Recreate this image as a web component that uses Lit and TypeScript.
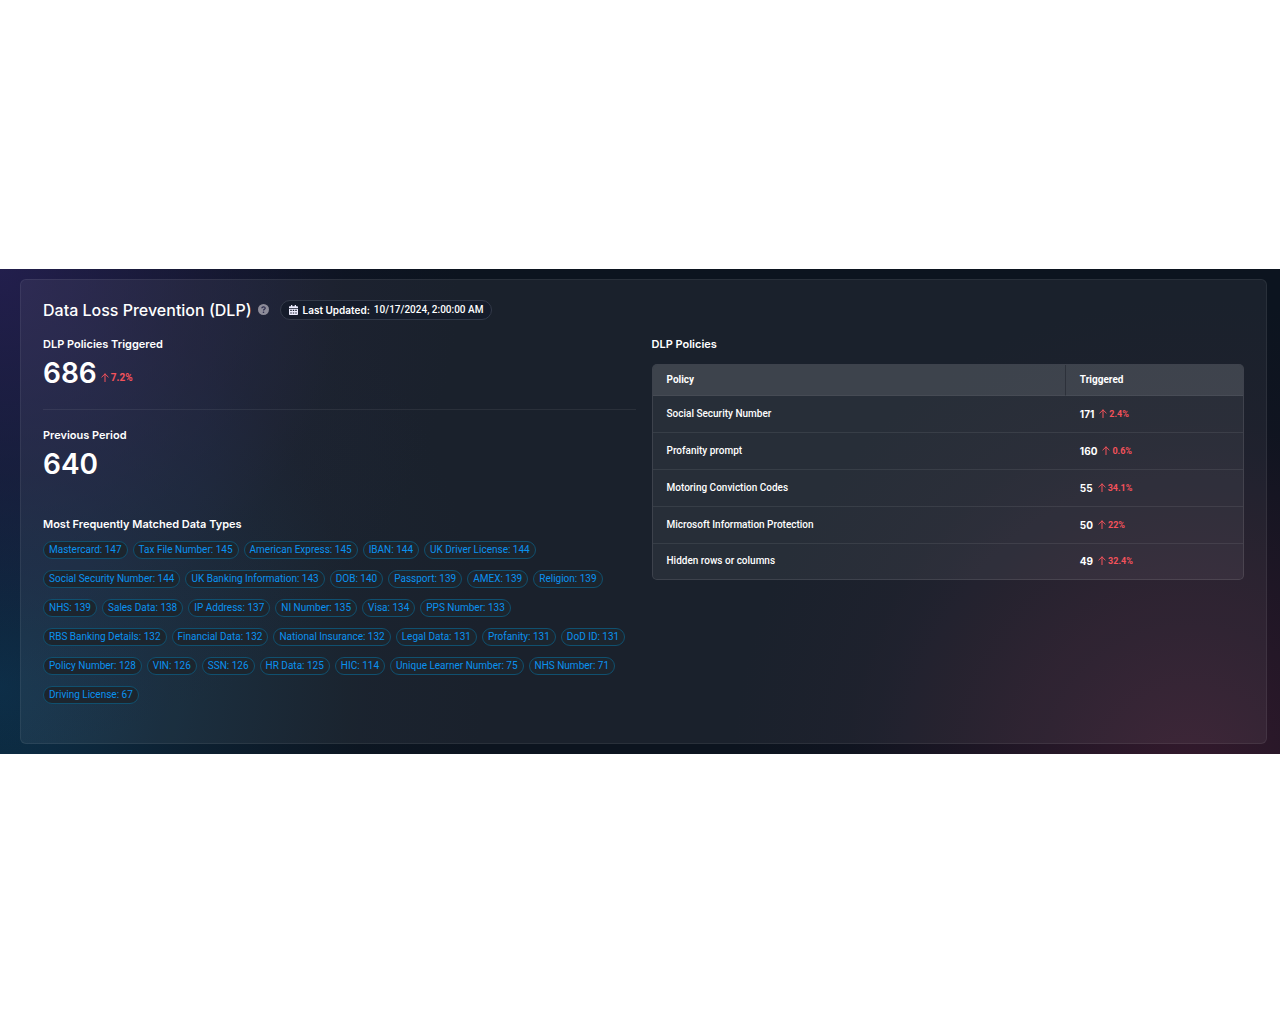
import { LitElement, html, css, svg } from "lit";
import { customElement } from "lit/decorators.js";

const dataTypes: [string, number][][] = [
  [["Mastercard", 147], ["Tax File Number", 145], ["American Express", 145], ["IBAN", 144], ["UK Driver License", 144]],
  [["Social Security Number", 144], ["UK Banking Information", 143], ["DOB", 140], ["Passport", 139], ["AMEX", 139], ["Religion", 139]],
  [["NHS", 139], ["Sales Data", 138], ["IP Address", 137], ["NI Number", 135], ["Visa", 134], ["PPS Number", 133]],
  [["RBS Banking Details", 132], ["Financial Data", 132], ["National Insurance", 132], ["Legal Data", 131], ["Profanity", 131], ["DoD ID", 131]],
  [["Policy Number", 128], ["VIN", 126], ["SSN", 126], ["HR Data", 125], ["HIC", 114], ["Unique Learner Number", 75], ["NHS Number", 71]],
  [["Driving License", 67]],
];

const policies = [
  { name: "Social Security Number", count: 171, change: "2.4%" },
  { name: "Profanity prompt", count: 160, change: "0.6%" },
  { name: "Motoring Conviction Codes", count: 55, change: "34.1%" },
  { name: "Microsoft Information Protection", count: 50, change: "22%" },
  { name: "Hidden rows or columns", count: 49, change: "32.4%" },
];

const trend = (value: string) => html`<span class="trend">
  <svg class="arrow" viewBox="0 0 8 10" aria-hidden="true">${svg`<path d="M4 8.6V0.9M0.8 4L4 0.9L7.2 4" fill="none" stroke="currentColor" stroke-width="1" stroke-linecap="round" stroke-linejoin="round"/>`}</svg>${value}</span>`;

@customElement("app-root")
export class AppRoot extends LitElement {
  static styles = css`
    :host {
      box-sizing: border-box;
      display: flex;
      flex-direction: column;
      justify-content: center;
      min-height: 100vh;
      padding-bottom: 2px;
      background: #fff;
      color: #fff;
      font: 500 10px/16px Roboto, sans-serif;
    }
    * { box-sizing: border-box; }
    h1, h2, p, ul { margin: 0; padding: 0; }
    .backdrop {
      padding: 10px 13px 10px 20px;
      background:
        radial-gradient(ellipse 36% 100% at 0% 0%, rgba(38, 32, 84, 0.85), rgba(33, 29, 72, 0.55) 40%, rgba(25, 24, 54, 0.16) 75%, transparent),
        radial-gradient(ellipse 38% 110% at 0% 86%, rgba(12, 51, 78, 0.9), rgba(13, 43, 65, 0.55) 40%, rgba(14, 32, 48, 0.16) 75%, transparent),
        radial-gradient(ellipse 36% 100% at 93% 106%, rgba(56, 26, 46, 0.9), rgba(46, 24, 42, 0.6) 40%, rgba(30, 21, 36, 0.2) 75%, transparent),
        #0c141f;
    }
    .card {
      padding: 20px 22px 39px;
      border: 1px solid rgba(255, 255, 255, 0.07);
      border-radius: 6px;
      background: rgba(255, 255, 255, 0.06);
    }
    .head { display: flex; align-items: center; height: 20px; }
    h1 { font: 500 16px/20px Inter, sans-serif; }
    .help {
      display: flex;
      margin: 0 11px 0 6px;
      padding: 0;
      border: 0;
      background: none;
      color: #8d8c99;
    }
    .help svg { width: 11px; height: 11px; }
    .updated {
      display: flex;
      align-items: center;
      height: 20px;
      padding: 0 8px;
      border: 1px solid #333a49;
      border-radius: 10px;
      background: #151c2b;
    }
    .updated svg { width: 9px; height: 10px; margin-right: 5px; }
    .updated strong { margin-right: 4px; font: 600 10px/16px Inter, sans-serif; }
    .columns {
      display: grid;
      grid-template-columns: 1fr 1fr;
      gap: 16px;
      margin-top: 15px;
    }
    h2 { font: 600 11px/18px Inter, sans-serif; }
    .metric { display: flex; align-items: baseline; gap: 4px; height: 40px; }
    .value { font: 600 28px/40px Inter, sans-serif; }
    .divider { height: 1px; margin: 16px 0; border: 0; background: rgba(255, 255, 255, 0.07); }
    .trend { display: inline-flex; align-items: center; gap: 2px; color: #f4525b; font-weight: 700; font-size: 10px; }
    .arrow { width: 8px; height: 10px; }
    .types { margin-top: 31px; }
    .tag-rows { display: flex; flex-direction: column; gap: 11px; margin-top: 8px; }
    .tags { display: flex; flex-wrap: wrap; gap: 5px; list-style: none; }
    .tag {
      height: 18px;
      padding: 0 5px;
      border: 1px solid #10506f;
      border-radius: 9px;
      background: #1c252e;
      color: #0a92f0;
      line-height: 16px;
      font-weight: 400;
    }
    .table-frame {
      margin-top: 11px;
      overflow: hidden;
      border: 1px solid rgba(255, 255, 255, 0.1);
      border-radius: 5px;
      background: rgba(255, 255, 255, 0.06);
    }
    table { width: 100%; table-layout: fixed; border-collapse: separate; border-spacing: 0; }
    th { height: 31px; padding: 0 14px; text-align: left; font-weight: 700; background: rgba(255, 255, 255, 0.1); border-bottom: 1px solid rgba(255, 255, 255, 0.05); }
    th:first-child { width: 70%; border-right: 1px solid rgba(20, 24, 34, 0.4); }
    td { height: 37px; padding: 0 14px; border-bottom: 1px solid rgba(255, 255, 255, 0.08); }
    tr:last-child td { height: 35px; border-bottom: 0; }
    .cell { display: flex; align-items: center; gap: 5px; }
    .count { font: 700 10px/16px Inter, sans-serif; }
    td .trend { font-size: 9px; line-height: 16px; }
  `;

  render() {
    return html`
      <main class="backdrop">
        <section class="card" aria-labelledby="title">
          <header class="head">
            <h1 id="title">Data Loss Prevention (DLP)</h1>
            <button class="help" type="button" aria-label="Help">
              <svg viewBox="0 0 22 22" aria-hidden="true">
                <circle cx="11" cy="11" r="11" fill="currentColor" />
                <path d="M7.6 8.4C7.8 4.6 14.4 4.6 14.4 8.4C14.4 10.6 11 10.6 11 13" fill="none" stroke="#29294a" stroke-width="2.4" />
                <circle cx="11" cy="16.4" r="1.6" fill="#29294a" />
              </svg>
            </button>
            <p class="updated">
              <svg viewBox="0 0 18 20" aria-hidden="true">
                <path d="M4 0h2.6v2.5h4.8V0H14v2.5h2.4Q18 2.5 18 4v2.4H0V4Q0 2.5 1.6 2.5H4Z" fill="#eef" />
                <path fill-rule="evenodd" d="M0 7.8H18V18.4Q18 20 16.4 20H1.6Q0 20 0 18.4ZM2.5 9.6v2.4h3V9.6ZM7.5 9.6v2.4h3V9.6ZM12.5 9.6v2.4h3V9.6ZM2.5 14.8v2.4h3v-2.4ZM7.5 14.8v2.4h3v-2.4ZM12.5 14.8v2.4h3v-2.4Z" fill="#eef" />
              </svg>
              <strong>Last Updated:</strong>
              <time datetime="2024-10-17T02:00:00">10/17/2024, 2:00:00 AM</time>
            </p>
          </header>
          <div class="columns">
            <div>
              <h2>DLP Policies Triggered</h2>
              <p class="metric"><span class="value">686</span>${trend("7.2%")}</p>
              <hr class="divider" />
              <h2>Previous Period</h2>
              <p class="metric"><span class="value">640</span></p>
              <div class="types">
                <h2>Most Frequently Matched Data Types</h2>
                <div class="tag-rows">
                  ${dataTypes.map((row) => html`<ul class="tags">
                    ${row.map(([name, count]) => html`<li class="tag">${name}: ${count}</li>`)}
                  </ul>`)}
                </div>
              </div>
            </div>
            <div>
              <h2 id="policies">DLP Policies</h2>
              <div class="table-frame">
                <table aria-labelledby="policies">
                  <thead><tr><th scope="col">Policy</th><th scope="col">Triggered</th></tr></thead>
                  <tbody>
                    ${policies.map((p) => html`<tr><td>${p.name}</td><td><div class="cell"><span class="count">${p.count}</span>${trend(p.change)}</div></td></tr>`)}
                  </tbody>
                </table>
              </div>
            </div>
          </div>
        </section>
      </main>
    `;
  }
}
